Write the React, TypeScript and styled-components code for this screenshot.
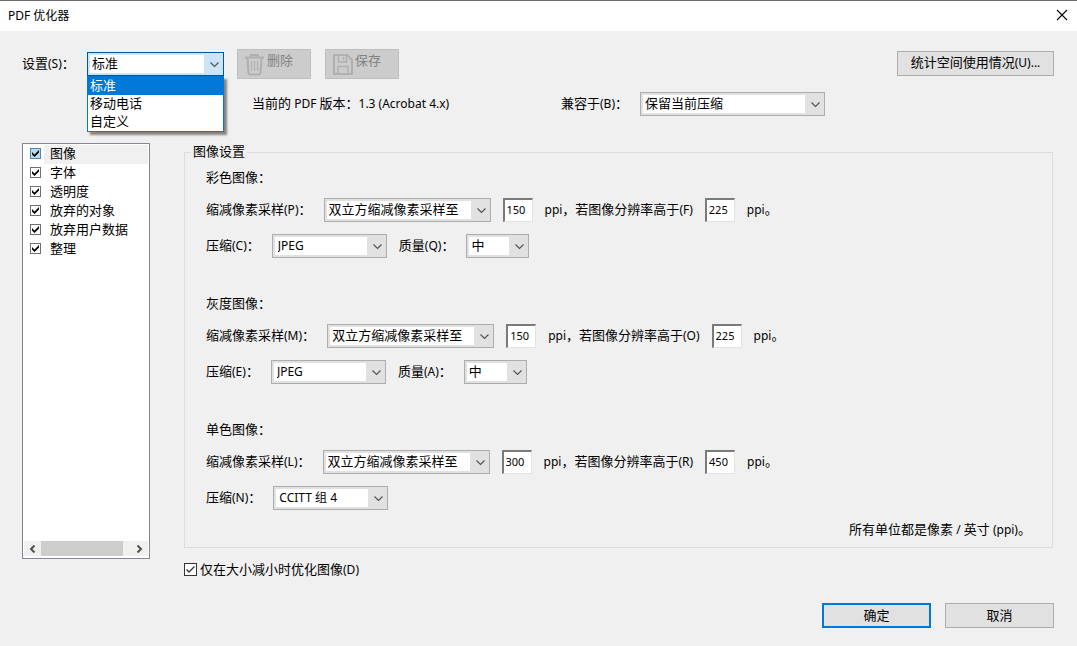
import React, { useState } from 'react';
import styled, { createGlobalStyle } from 'styled-components';

const GlobalStyle = createGlobalStyle`
  *, *::before, *::after { box-sizing: border-box; }
  body {
    margin: 0;
    background: #f0f0f0;
    color: #000;
    font-family: "Noto Sans", "Noto Sans CJK SC", sans-serif;
    font-size: 13px;
    line-height: 18px;
  }
  button, input, select { font-family: inherit; font-size: inherit; line-height: inherit; color: inherit; margin: 0; }
`;

/* Latin runs are set one size below the Chinese text around them. */
const Latin = styled.span`
  font-size: 12px;
  white-space: pre;
`;

const Mixed = ({ children }: { children: string }) => (
  <>
    {children
      .split(/([\x20-\x7e]+)/)
      .filter(Boolean)
      .map((part, i) => (/^[\x20-\x7e]/.test(part) ? <Latin key={i}>{part}</Latin> : part))}
  </>
);

const Dialog = styled.div`
  min-height: 100vh;
  border-top: 1px solid #6b6b6b;
  background: #f0f0f0;
`;

const TitleBar = styled.header`
  display: flex;
  align-items: center;
  justify-content: space-between;
  height: 30px;
  padding: 0 9px 0 8px;
  background: #fff;
`;

const Title = styled.h1`
  margin: 0;
  font-size: 12px;
  font-weight: 400;
  line-height: 18px;
`;

const CloseButton = styled.button`
  display: flex;
  padding: 0 0 2px;
  border: 0;
  background: none;
`;

const Content = styled.div`
  padding: 18px 23px 18px 22px;
`;

const Toolbar = styled.div`
  display: flex;
  align-items: center;
  height: 30px;
`;

const ToolbarLabel = styled.label`
  width: 65px;
  padding-bottom: 2px;
  white-space: nowrap;
`;

const InfoRow = styled.div`
  display: flex;
  align-items: center;
  height: 24px;
  margin: 13px 0 27px;
  padding-left: 230px;
`;

const VersionText = styled.span`
  width: 309px;
  padding-bottom: 2px;
  white-space: nowrap;
`;

const InfoLabel = styled.label`
  width: 79px;
  padding-bottom: 2px;
  white-space: nowrap;
`;

const PushButton = styled.button<{ $width: number; $primary?: boolean }>`
  display: block;
  width: ${p => p.$width}px;
  height: 25px;
  padding: 0 0 2px;
  border: ${p => (p.$primary ? '2px solid #0078d7' : '1px solid #adadad')};
  background: #e1e1e1;
  white-space: nowrap;
`;

const IconButton = styled.button`
  display: flex;
  align-items: flex-start;
  gap: 2px;
  width: 74px;
  height: 30px;
  margin-right: 14px;
  padding: 3px 0 0 6px;
  border: 1px solid #bfbfbf;
  background: #ccc;
  color: #838383;
  line-height: 14px;
`;

const UsageSlot = styled.div`
  align-self: flex-start;
  margin-left: auto;
  padding-top: 2px;
`;

const ComboAnchor = styled.div`
  position: relative;
  margin-right: 13px;
`;

const ComboBox = styled.span<{ $width: number }>`
  display: inline-grid;
  flex: none;
  width: ${p => p.$width}px;
  height: 24px;
`;

const ComboSelect = styled.select<{ $open?: boolean; $latin?: boolean }>`
  grid-area: 1 / 1;
  width: 100%;
  height: 24px;
  padding: ${p => (p.$latin ? '0 20px 0 5px' : '0 20px 2px 4px')};
  appearance: none;
  border: 1px solid ${p => (p.$open ? '#00559b' : '#adadad')};
  border-radius: 0;
  outline: 0;
  background: linear-gradient(#fff, #fff) 2px 2px / calc(100% - 21px) 18px no-repeat
    ${p => (p.$open ? '#cce4f7' : '#e1e1e1')};
  font-size: ${p => (p.$latin ? 12 : 13)}px;
`;

const ComboArrow = styled.svg`
  grid-area: 1 / 1;
  place-self: center end;
  margin-right: 4px;
  pointer-events: none;
`;

type ComboProps = { id: string; width: number; options: string[]; open?: boolean; latin?: boolean };

const Combo = ({ id, width, options, open, latin }: ComboProps) => (
  <ComboBox $width={width}>
    <ComboSelect id={id} $open={open} $latin={latin}>
      {options.map(o => (
        <option key={o}>{o}</option>
      ))}
    </ComboSelect>
    <ComboArrow width="11" height="8" viewBox="0 0 11 8">
      <path d="M1.5 2.5 L5.5 6.5 L9.5 2.5" fill="none" stroke="#505050" strokeWidth="1.1" />
    </ComboArrow>
  </ComboBox>
);

const DropList = styled.ul`
  position: absolute;
  top: 100%;
  left: 0;
  z-index: 1;
  width: 100%;
  margin: 0;
  padding: 0;
  border: 1px solid #0078d7;
  background: #fff;
  box-shadow: 3px 3px 2px rgba(0, 0, 0, 0.45);
  list-style: none;
`;

const DropItem = styled.li<{ $selected?: boolean }>`
  height: 18px;
  padding-left: 2px;
  background: ${p => (p.$selected ? '#0078d7' : '#fff')};
  color: ${p => (p.$selected ? '#fff' : '#000')};
  line-height: 17px;
`;

const Columns = styled.div`
  display: flex;
  align-items: flex-start;
  gap: 34px;
`;

const CategoryPane = styled.nav`
  display: flex;
  flex: none;
  flex-direction: column;
  width: 128px;
  height: 416px;
  padding: 1px 1px 2px;
  border: 1px solid #828790;
  background: #fff;
`;

const CategoryList = styled.ul`
  flex: 1;
  margin: 0;
  padding: 0;
  list-style: none;
`;

const CategoryRow = styled.li`
  display: flex;
  align-items: flex-start;
  height: 19px;
  padding-left: 6px;
`;

const CategoryName = styled.label<{ $selected?: boolean }>`
  flex: 1;
  height: 19px;
  margin-left: 3px;
  padding-left: 6px;
  background: ${p => (p.$selected ? '#f0f0f0' : 'transparent')};
  line-height: 16px;
`;

const TickBox = styled.span`
  display: inline-grid;
  flex: none;
  ${CategoryRow} & { margin-top: 3px; }
`;

const TickInput = styled.input<{ $size: number; $hot?: boolean }>`
  grid-area: 1 / 1;
  width: ${p => p.$size}px;
  height: ${p => p.$size}px;
  appearance: none;
  border: 1px solid ${p => (p.$hot ? '#5586a3' : p.$size > 11 ? '#333' : '#707070')};
  background: ${p => (p.$hot ? '#b9dcf2' : '#fff')};
`;

const TickMark = styled.svg`
  grid-area: 1 / 1;
  place-self: center;
  pointer-events: none;
  input:not(:checked) + & { visibility: hidden; }
`;

const ScrollBar = styled.div`
  display: flex;
  height: 15px;
  background: #f0f0f0;
`;

const ScrollButton = styled.button`
  display: flex;
  flex: none;
  align-items: center;
  justify-content: center;
  width: 17px;
  padding: 0;
  border: 0;
  background: none;
`;

const ScrollTrack = styled.div`
  flex: 1;
  padding-right: 8px;
`;

const ScrollThumb = styled.div`
  height: 15px;
  background: #cdcdcd;
`;

const MainColumn = styled.main`
  flex: 1;
  min-width: 0;
`;

const GroupBox = styled.fieldset`
  margin: 0 1px 0 0;
  padding: 7px 21px 7px;
  border: 1px solid #dcdcdc;
`;

const GroupTitle = styled.legend`
  height: 18px;
  margin-left: -15px;
  padding: 0 2px;
  line-height: 16px;
`;

const ImageSection = styled.section`
  margin-bottom: 36px;
  &:last-of-type { margin-bottom: 9px; }
`;

const SectionTitle = styled.h2`
  margin: 0 0 12px;
  font-size: 13px;
  font-weight: 400;
  line-height: 18px;
`;

const FieldRow = styled.div`
  display: flex;
  align-items: center;
  gap: 12px;
  height: 24px;
  white-space: nowrap;
  & + & { margin-top: 12px; }
`;

const FieldLabel = styled.label`
  padding-bottom: 2px;
`;

const NumberBox = styled.input`
  width: 30px;
  height: 24px;
  padding: 0 0 3px 2px;
  border: 2px solid;
  border-width: 2px 1px 1px 2px;
  border-color: #7a7a7a #e3e3e3 #e3e3e3 #7a7a7a;
  border-radius: 0;
  background: #fff;
  font-size: 11px;
`;

const UnitNote = styled.p`
  margin: 0;
  line-height: 20px;
  text-align: right;
`;

const OnlyIfSmaller = styled.div`
  display: flex;
  align-items: center;
  gap: 3px;
  height: 18px;
  margin-top: 12px;
`;

const Footer = styled.footer`
  display: flex;
  justify-content: flex-end;
  gap: 14px;
  margin-top: 25px;
`;

type Section = {
  title: string;
  id: string;
  sample: string;
  above: string;
  compress: string;
  quality?: string;
  format: string;
  ppi: string;
  limit: string;
};

const sections: Section[] = [
  { id: 'color', title: '彩色图像：', sample: 'P', above: 'F', compress: 'C', quality: 'Q', format: 'JPEG', ppi: '150', limit: '225' },
  { id: 'gray', title: '灰度图像：', sample: 'M', above: 'O', compress: 'E', quality: 'A', format: 'JPEG', ppi: '150', limit: '225' },
  { id: 'mono', title: '单色图像：', sample: 'L', above: 'R', compress: 'N', format: 'CCITT 组 4', ppi: '300', limit: '450' },
];

const categories = ['图像', '字体', '透明度', '放弃的对象', '放弃用户数据', '整理'];
const presets = ['标准', '移动电话', '自定义'];

const ImageFields = ({ s }: { s: Section }) => (
  <ImageSection>
    <SectionTitle>{s.title}</SectionTitle>
    <FieldRow>
      <FieldLabel htmlFor={`${s.id}-method`}><Mixed>{`缩减像素采样(${s.sample})：`}</Mixed></FieldLabel>
      <Combo id={`${s.id}-method`} width={167} options={['双立方缩减像素采样至']} />
      <NumberBox id={`${s.id}-ppi`} aria-label="ppi" defaultValue={s.ppi} />
      <FieldLabel htmlFor={`${s.id}-limit`}><Mixed>{`ppi，若图像分辨率高于(${s.above})`}</Mixed></FieldLabel>
      <NumberBox id={`${s.id}-limit`} defaultValue={s.limit} />
      <FieldLabel htmlFor={`${s.id}-limit`}><Mixed>ppi。</Mixed></FieldLabel>
    </FieldRow>
    <FieldRow>
      <FieldLabel htmlFor={`${s.id}-format`}><Mixed>{`压缩(${s.compress})：`}</Mixed></FieldLabel>
      <Combo id={`${s.id}-format`} width={115} options={[s.format]} latin />
      {s.quality && (
        <>
          <FieldLabel htmlFor={`${s.id}-quality`}><Mixed>{`质量(${s.quality})：`}</Mixed></FieldLabel>
          <Combo id={`${s.id}-quality`} width={63} options={['中']} />
        </>
      )}
    </FieldRow>
  </ImageSection>
);

export default function App() {
  const [checked, setChecked] = useState(categories.map(() => true));
  const toggle = (i: number) => setChecked(c => c.map((v, n) => (n === i ? !v : v)));

  return (
    <>
      <GlobalStyle />
      <Dialog>
        <TitleBar>
          <Title>PDF 优化器</Title>
          <CloseButton aria-label="关闭">
            <svg width="12" height="12" viewBox="0 0 12 12">
              <path d="M1 1 L11 11 M11 1 L1 11" stroke="#000" strokeWidth="1.1" />
            </svg>
          </CloseButton>
        </TitleBar>
        <Content>
          <Toolbar>
            <ToolbarLabel htmlFor="preset"><Mixed>设置(S)：</Mixed></ToolbarLabel>
            <ComboAnchor>
              <Combo id="preset" width={137} options={presets} open />
              <DropList role="listbox">
                {presets.map((p, i) => (
                  <DropItem key={p} role="option" aria-selected={i === 0} $selected={i === 0}>{p}</DropItem>
                ))}
              </DropList>
            </ComboAnchor>
            <IconButton disabled>
              <svg width="21" height="23" viewBox="0 0 21 23" fill="none" stroke="#b0b0b0" strokeWidth="2">
                <path d="M1 4.5 H20 M7 4 V2 H14 V4 M3.5 5 L4.5 20 Q4.6 21.5 6 21.5 H15 Q16.4 21.5 16.5 20 L17.5 5" />
                <path d="M7.5 8 V18 M10.5 8 V18 M13.5 8 V18" strokeWidth="1.2" />
              </svg>
              删除
            </IconButton>
            <IconButton disabled>
              <svg width="21" height="23" viewBox="0 0 21 23" fill="none" stroke="#b0b0b0" strokeWidth="2">
                <path d="M2 2 H15 L20 7 V21 H2 Z" />
                <path d="M6.5 2 V9 H14.5 V2 M6 21 V13.5 H16 V21 M11.5 4 V7" strokeWidth="1.4" />
              </svg>
              保存
            </IconButton>
            <UsageSlot>
              <PushButton $width={157}><Mixed>统计空间使用情况(U)...</Mixed></PushButton>
            </UsageSlot>
          </Toolbar>
          <InfoRow>
            <VersionText><Mixed>当前的 PDF 版本：1.3 (Acrobat 4.x)</Mixed></VersionText>
            <InfoLabel htmlFor="compat"><Mixed>兼容于(B)：</Mixed></InfoLabel>
            <Combo id="compat" width={185} options={['保留当前压缩']} />
          </InfoRow>
          <Columns>
            <CategoryPane>
              <CategoryList>
                {categories.map((name, i) => (
                  <CategoryRow key={name}>
                    <TickBox>
                      <TickInput
                        id={`cat-${i}`}
                        type="checkbox"
                        $size={11}
                        $hot={i === 0}
                        checked={checked[i]}
                        onChange={() => toggle(i)}
                      />
                      <TickMark width="7" height="7" viewBox="0 0 7 7">
                        <path d="M0 2 L2.5 4.5 L7 0 V2.6 L2.5 7 L0 4.6 Z" fill="#000" />
                      </TickMark>
                    </TickBox>
                    <CategoryName htmlFor={`cat-${i}`} $selected={i === 0}>{name}</CategoryName>
                  </CategoryRow>
                ))}
              </CategoryList>
              <ScrollBar>
                <ScrollButton aria-label="向左滚动">
                  <svg width="7" height="8" viewBox="0 0 7 8">
                    <path d="M5.5 0.5 L2 4 L5.5 7.5" fill="none" stroke="#505050" strokeWidth="2" />
                  </svg>
                </ScrollButton>
                <ScrollTrack><ScrollThumb /></ScrollTrack>
                <ScrollButton aria-label="向右滚动">
                  <svg width="7" height="8" viewBox="0 0 7 8">
                    <path d="M1.5 0.5 L5 4 L1.5 7.5" fill="none" stroke="#505050" strokeWidth="2" />
                  </svg>
                </ScrollButton>
              </ScrollBar>
            </CategoryPane>
            <MainColumn>
              <GroupBox>
                <GroupTitle>图像设置</GroupTitle>
                {sections.map(s => <ImageFields key={s.id} s={s} />)}
                <UnitNote><Mixed>所有单位都是像素 / 英寸 (ppi)。</Mixed></UnitNote>
              </GroupBox>
              <OnlyIfSmaller>
                <TickBox>
                  <TickInput id="only-smaller" type="checkbox" $size={13} defaultChecked />
                  <TickMark width="11" height="11" viewBox="0 0 11 11">
                    <path d="M1.5 5.5 L4 8 L9.5 2.5" fill="none" stroke="#333" strokeWidth="1.3" />
                  </TickMark>
                </TickBox>
                <label htmlFor="only-smaller"><Mixed>仅在大小减小时优化图像(D)</Mixed></label>
              </OnlyIfSmaller>
            </MainColumn>
          </Columns>
          <Footer>
            <PushButton $width={109} $primary>确定</PushButton>
            <PushButton $width={109}>取消</PushButton>
          </Footer>
        </Content>
      </Dialog>
    </>
  );
}
